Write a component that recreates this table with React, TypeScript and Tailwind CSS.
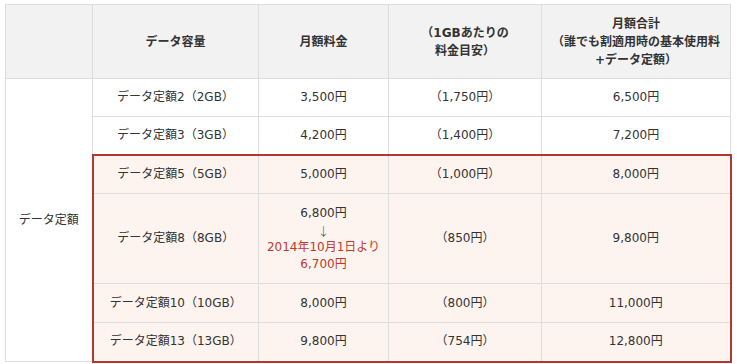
const rows = [
  { name: 'データ定額2（2GB）', price: '3,500円', per: '（1,750円）', total: '6,500円', hl: false },
  { name: 'データ定額3（3GB）', price: '4,200円', per: '（1,400円）', total: '7,200円', hl: false },
  { name: 'データ定額5（5GB）', price: '5,000円', per: '（1,000円）', total: '8,000円', hl: true },
  { name: 'データ定額8（8GB）', price: '', per: '（850円）', total: '9,800円', hl: true },
  { name: 'データ定額10（10GB）', price: '8,000円', per: '（800円）', total: '11,000円', hl: true },
  { name: 'データ定額13（13GB）', price: '9,800円', per: '（754円）', total: '12,800円', hl: true },
];

export default function App() {
  return (
    <div className="min-h-[364px] w-[737px] bg-white pl-[5px] pt-[4px] text-[12px] text-[#333] [font-family:'DejaVu_Sans','Noto_Sans_CJK_JP',sans-serif]">
      <table className="w-[725px] table-fixed border-collapse">
        <colgroup>
          <col className="w-[87px]" />
          <col className="w-[166px]" />
          <col className="w-[130px]" />
          <col className="w-[153px]" />
          <col className="w-[189px]" />
        </colgroup>
        <thead>
          <tr className="h-[74px] bg-[#f2f2f2] font-bold leading-[18px]">
            <th className="border border-[#ddd]"></th>
            <th className="border border-[#ddd]">データ容量</th>
            <th className="border border-[#ddd]">月額料金</th>
            <th className="border border-[#ddd]">
              （1GBあたりの
              <br />
              料金目安）
            </th>
            <th className="border border-[#ddd]">
              月額合計
              <br />
              （誰でも割適用時の基本使用料
              <br />
              +データ定額）
            </th>
          </tr>
        </thead>
        <tbody>
          {rows.map((r, i) => {
            const first = i === 2;
            const last = i === rows.length - 1;
            const base = `border border-[#ddd] text-center align-middle ${r.hl ? 'bg-[#fdf4ef]' : 'bg-white'}`;
            const edge = r.hl
              ? `${first ? 'border-t-2 border-t-[#b0382c]' : ''} ${last ? 'border-b-2 border-b-[#b0382c]' : ''}`
              : '';
            const h = i === 3 ? 'h-[90px]' : i < 2 ? 'h-[38px]' : 'h-[39px]';
            return (
              <tr key={r.name} className={`${h} leading-[17px]`}>
                {i === 0 && (
                  <td rowSpan={6} className="border border-[#ddd] bg-white text-center align-middle">
                    データ定額
                  </td>
                )}
                <td className={`${base} ${edge} ${r.hl ? 'border-l-2 border-l-[#b0382c]' : ''}`}>{r.name}</td>
                <td className={`${base} ${edge}`}>
                  {i === 3 ? (
                    <div>
                      <div>6,800円</div>
                      <div className="font-light text-[#555] [font-family:'Noto_Sans_CJK_JP',sans-serif]">↓</div>
                      <div className="text-[#c0392b]">2014年10月1日より</div>
                      <div className="text-[#c0392b]">6,700円</div>
                    </div>
                  ) : (
                    r.price
                  )}
                </td>
                <td className={`${base} ${edge}`}>{r.per}</td>
                <td className={`${base} ${edge} ${r.hl ? 'border-r-2 border-r-[#b0382c]' : ''}`}>{r.total}</td>
              </tr>
            );
          })}
        </tbody>
      </table>
    </div>
  );
}
